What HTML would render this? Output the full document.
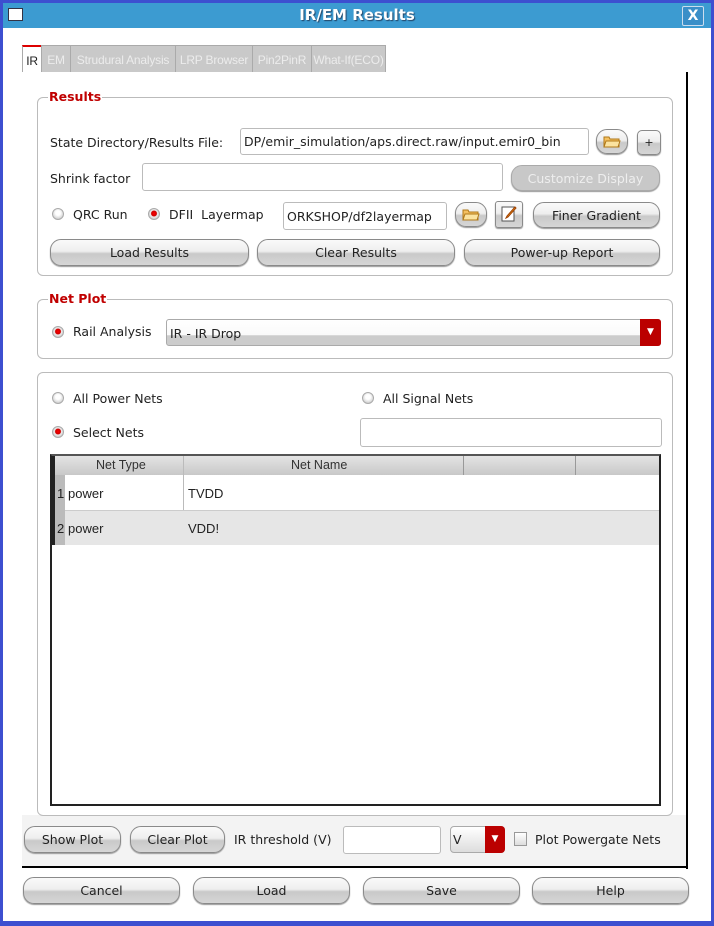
<!DOCTYPE html>
<html><head><meta charset="utf-8"><style>
*{box-sizing:border-box;margin:0;padding:0}
body{width:714px;height:926px;position:relative;background:#3d4fd0;font-family:"DejaVu Sans","Liberation Sans",sans-serif;font-size:12.5px;color:#222;overflow:hidden}
.a{position:absolute}
#win{left:3px;top:3px;width:708px;height:918px;background:#fff}
#title{left:3px;top:3px;width:708px;height:25px;background:#3c9bd1;color:#fff;font-weight:bold;font-size:15px;text-align:center;line-height:25px;text-shadow:1px 1px 1px #246}
.tab{top:45px;height:27px;background:#c9c9c9;color:#ececec;border-left:1px solid #aaa;border-top:1px solid #aaa;line-height:28px;text-align:center;font-size:12px;font-family:"Liberation Sans",sans-serif;white-space:nowrap;overflow:hidden;letter-spacing:-0.2px}
.grp{border:1px solid #bbb;border-radius:6px}
.leg{color:#c00000;font-weight:bold;background:#fff;padding:0 1px;font-size:12.5px;line-height:14px}
.btn{border:1px solid #8a8a8a;border-radius:11px;background:linear-gradient(#fafafa 0%,#eee 45%,#c9c9c9 55%,#d6d6d6 100%);text-align:center;color:#222;box-shadow:0 1px 1px #999}
.inp{border:1px solid #bbb;border-radius:3px;background:#fff;overflow:hidden;white-space:nowrap;padding-left:3px}
.rad{width:12px;height:12px;border-radius:50%;background:radial-gradient(circle at 50% 40%,#fff 30%,#ccc 80%,#999);border:1px solid #aaa}
.rad.on{background:radial-gradient(circle at 50% 45%,#f00 0,#c00 35%,#eee 45%,#bbb 90%)}
.t{white-space:nowrap}
.btn svg{margin-top:5px}
</style></head><body>
<div class="a" id="win"></div>
<div class="a" id="title">IR/EM Results</div>
<div class="a" style="left:8px;top:8px;width:15px;height:13px;background:#fff;border:1px solid #334"></div>
<div class="a" style="left:682px;top:6px;width:22px;height:20px;border:1px solid #cde;border-radius:2px;background:#3a8fc8;color:#fff;font-weight:bold;text-align:center;line-height:18px;font-size:14px">X</div>

<div class="a tab" style="left:22px;width:19px;background:#fff;color:#222;border-top:2px solid #d00">IR</div>
<div class="a tab" style="left:41px;width:29px">EM</div>
<div class="a tab" style="left:70px;width:105px">Strudural Analysis</div>
<div class="a tab" style="left:175px;width:77px">LRP Browser</div>
<div class="a tab" style="left:252px;width:59px">Pin2PinR</div>
<div class="a tab" style="left:311px;width:75px;border-right:1px solid #aaa">What-If(ECO)</div>

<div class="a" style="left:22px;top:815px;width:665px;height:52px;background:#f3f3f3"></div>
<div class="a" style="left:686px;top:72px;width:2px;height:797px;background:#000"></div>
<div class="a" style="left:22px;top:866px;width:666px;height:2px;background:#000"></div>

<!-- Results -->
<div class="a grp" style="left:37px;top:97px;width:636px;height:179px"></div>
<div class="a leg" style="left:48px;top:90px">Results</div>
<div class="a t" style="left:50px;top:135px">State Directory/Results File:</div>
<div class="a inp" style="left:240px;top:128px;width:349px;height:27px;line-height:26px">DP/emir_simulation/aps.direct.raw/input.emir0_bin</div>
<div class="a btn" style="left:596px;top:129px;width:32px;height:25px"><svg width="18" height="13" viewBox="0 0 18 13"><path d="M1 2h5l1 2h9v8H1z" fill="#f4c060" stroke="#b07818"/><path d="M3 6h14l-2 6H1z" fill="#fbe3a0" stroke="#b07818"/></svg></div>
<div class="a btn" style="left:637px;top:130px;width:24px;height:25px;border-radius:5px;line-height:24px;font-size:11px">+</div>
<div class="a t" style="left:50px;top:171px">Shrink factor</div>
<div class="a inp" style="left:142px;top:163px;width:361px;height:28px"></div>
<div class="a btn" style="left:511px;top:165px;width:149px;height:26px;line-height:25px;color:#eee;background:#c8c8c8;border-color:#aaa">Customize Display</div>
<div class="a rad" style="left:52px;top:208px"></div>
<div class="a t" style="left:73px;top:207px">QRC Run</div>
<div class="a rad on" style="left:148px;top:208px"></div>
<div class="a t" style="left:169px;top:207px">DFII &nbsp;Layermap</div>
<div class="a inp" style="left:283px;top:202px;width:164px;height:28px;line-height:27px">ORKSHOP/df2layermap</div>
<div class="a btn" style="left:455px;top:202px;width:32px;height:25px"><svg width="18" height="13" viewBox="0 0 18 13"><path d="M1 2h5l1 2h9v8H1z" fill="#f4c060" stroke="#b07818"/><path d="M3 6h14l-2 6H1z" fill="#fbe3a0" stroke="#b07818"/></svg></div>
<div class="a btn" style="left:495px;top:201px;width:28px;height:27px;border-radius:3px"><svg width="18" height="18" viewBox="0 0 18 18" style="margin-top:3px"><rect x="2" y="2" width="12" height="14" fill="#fff" stroke="#555"/><path d="M6 13l2-1 8-9-1-1-8 9z" fill="#f0a020" stroke="#a04000"/></svg></div>
<div class="a btn" style="left:533px;top:202px;width:127px;height:26px;line-height:25px">Finer Gradient</div>
<div class="a btn" style="left:50px;top:239px;width:199px;height:27px;line-height:26px">Load Results</div>
<div class="a btn" style="left:257px;top:239px;width:198px;height:27px;line-height:26px">Clear Results</div>
<div class="a btn" style="left:464px;top:239px;width:196px;height:27px;line-height:26px">Power-up Report</div>

<!-- Net Plot -->
<div class="a grp" style="left:37px;top:299px;width:636px;height:60px"></div>
<div class="a leg" style="left:48px;top:292px">Net Plot</div>
<div class="a rad on" style="left:52px;top:326px"></div>
<div class="a t" style="left:73px;top:324px">Rail Analysis</div>
<div class="a" style="left:166px;top:319px;width:495px;height:27px;border:1px solid #aaa;border-radius:3px;background:linear-gradient(#fff 0%,#fafafa 60%,#ccc 62%,#ccc 100%);padding-left:3px;line-height:27px">IR - IR Drop</div>
<div class="a" style="left:640px;top:319px;width:21px;height:27px;background:#b00;border-radius:0 3px 3px 0;color:#fff;text-align:center;line-height:27px;font-size:9px">▼</div>

<!-- Nets -->
<div class="a grp" style="left:37px;top:372px;width:636px;height:444px"></div>
<div class="a rad" style="left:52px;top:392px"></div>
<div class="a t" style="left:73px;top:391px">All Power Nets</div>
<div class="a rad" style="left:362px;top:392px"></div>
<div class="a t" style="left:383px;top:391px">All Signal Nets</div>
<div class="a rad on" style="left:52px;top:426px"></div>
<div class="a t" style="left:73px;top:425px">Select Nets</div>
<div class="a inp" style="left:360px;top:418px;width:302px;height:29px"></div>

<div class="a" style="left:50px;top:454px;width:611px;height:352px;border:2px solid #222;border-top-color:#555;background:#fff"></div>
<div class="a" style="left:52px;top:456px;width:607px;height:19px;background:linear-gradient(#e4e4e4,#c8c8c8)"></div>
<div class="a" style="left:52px;top:456px;width:3px;height:89px;background:#222"></div>
<div class="a" style="left:55px;top:475px;width:10px;height:70px;background:#bbb"></div>
<div class="a t" style="left:96px;top:458px;font-family:'Liberation Sans';color:#333">Net Type</div>
<div class="a t" style="left:291px;top:458px;font-family:'Liberation Sans';color:#333">Net Name</div>
<div class="a" style="left:183px;top:456px;width:1px;height:89px;background:#bbb"></div>
<div class="a" style="left:463px;top:456px;width:1px;height:19px;background:#999"></div>
<div class="a" style="left:575px;top:456px;width:1px;height:19px;background:#999"></div>
<div class="a" style="left:65px;top:510px;width:594px;height:35px;background:#e6e6e6;border-top:1px solid #ccc"></div>
<div class="a t" style="left:57px;top:486px;font-family:'Liberation Sans';font-size:13px">1</div>
<div class="a t" style="left:68px;top:486px;font-family:'Liberation Sans';font-size:13px">power</div>
<div class="a t" style="left:188px;top:486px;font-family:'Liberation Sans';font-size:13px">TVDD</div>
<div class="a t" style="left:57px;top:521px;font-family:'Liberation Sans';font-size:13px">2</div>
<div class="a t" style="left:68px;top:521px;font-family:'Liberation Sans';font-size:13px">power</div>
<div class="a t" style="left:188px;top:521px;font-family:'Liberation Sans';font-size:13px">VDD!</div>

<!-- bottom row -->
<div class="a btn" style="left:24px;top:826px;width:97px;height:27px;line-height:26px">Show Plot</div>
<div class="a btn" style="left:130px;top:826px;width:95px;height:27px;line-height:26px">Clear Plot</div>
<div class="a t" style="left:234px;top:832px">IR threshold (V)</div>
<div class="a inp" style="left:343px;top:826px;width:98px;height:28px"></div>
<div class="a" style="left:450px;top:826px;width:55px;height:27px;border:1px solid #aaa;border-radius:4px;background:linear-gradient(#fff,#ddd);line-height:26px;padding-left:2px">V</div>
<div class="a" style="left:485px;top:826px;width:20px;height:27px;background:#b00;border-radius:0 4px 4px 0;color:#fff;font-size:9px;text-align:center;line-height:27px">▼</div>
<div class="a" style="left:514px;top:832px;width:13px;height:14px;border:1px solid #999;background:linear-gradient(#fff,#ddd)"></div>
<div class="a t" style="left:535px;top:832px">Plot Powergate Nets</div>

<div class="a btn" style="left:23px;top:877px;width:157px;height:27px;line-height:26px">Cancel</div>
<div class="a btn" style="left:193px;top:877px;width:157px;height:27px;line-height:26px">Load</div>
<div class="a btn" style="left:363px;top:877px;width:157px;height:27px;line-height:26px">Save</div>
<div class="a btn" style="left:532px;top:877px;width:157px;height:27px;line-height:26px">Help</div>
</body></html>
